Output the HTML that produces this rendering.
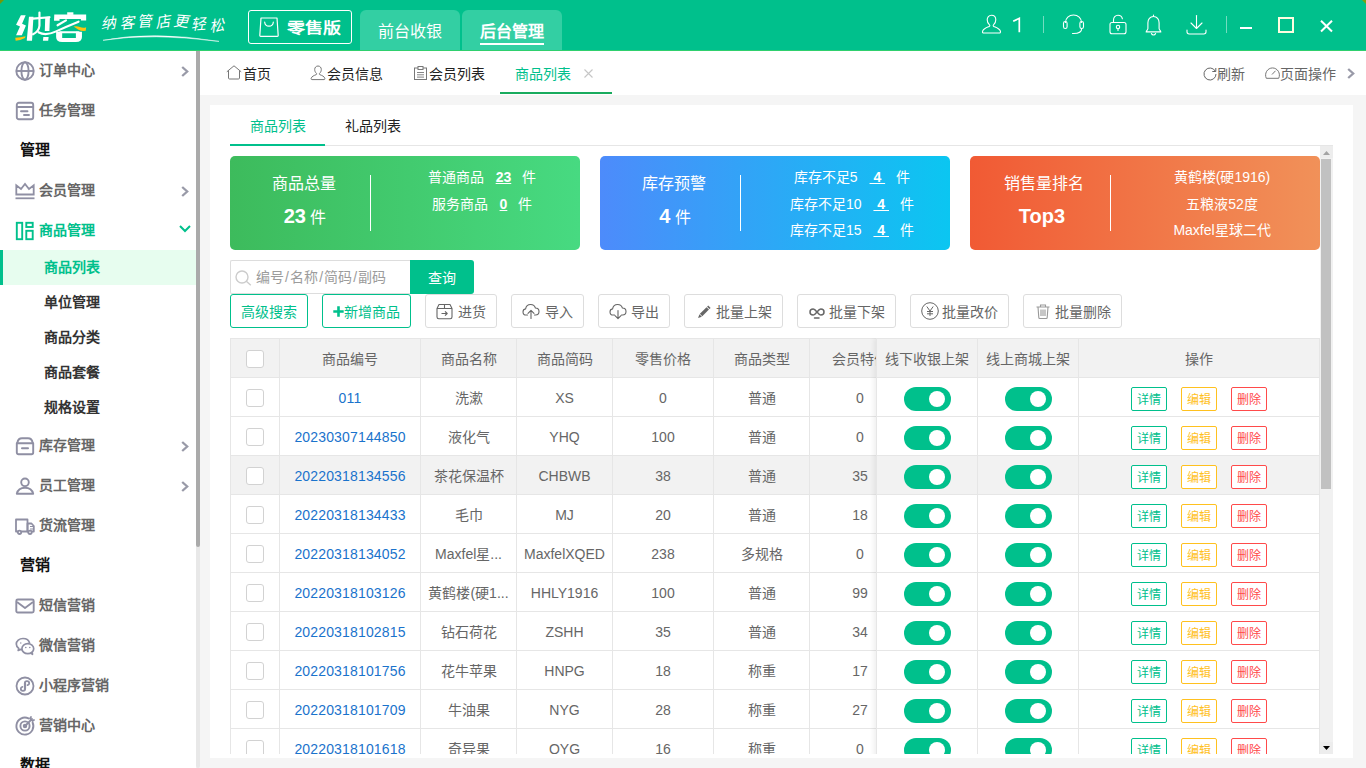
<!DOCTYPE html>
<html lang="zh-CN">
<head>
<meta charset="utf-8">
<title>商品列表</title>
<style>
*{box-sizing:border-box;margin:0;padding:0}
html,body{width:1366px;height:768px;overflow:hidden;background:#f5f5f5}
body{font-family:"Liberation Sans",sans-serif;font-size:14px;color:#666;position:relative}
.abs{position:absolute}
svg{display:block;overflow:visible}
/* header */
#hd{position:absolute;left:0;top:0;width:1366px;height:51px;background:#00c08c;border-bottom:1px solid #2fd06e}
#hd .logo{position:absolute;left:15px;top:5px;font-size:35px;line-height:40px;font-weight:900;color:#fff;letter-spacing:-1px;transform:skewX(-7deg);transform-origin:left bottom;white-space:nowrap}
#hd .slogan{position:absolute;left:101px;top:12px;font-family:"Liberation Serif",serif;font-style:italic;font-size:15px;line-height:22px;color:#fff;letter-spacing:3px;font-weight:300;white-space:nowrap}
.ver{position:absolute;left:248px;top:10px;width:104px;height:34px;border:1px solid #fff;border-radius:3px;color:#fff}
.ver span{position:absolute;left:38px;top:2px;line-height:30px;font-size:18px;font-weight:900;white-space:nowrap;transform:scaleY(.8);transform-origin:center}
.htab{position:absolute;top:10px;width:100px;height:40px;background:#33cfa3;border-radius:6px 6px 0 0;color:#fff;font-size:16px;line-height:43px;text-align:center}
.htab.on{font-weight:bold}
.htab.on i{position:absolute;left:18px;top:33px;width:64px;height:2px;background:#fff}
.hdiv{position:absolute;top:16px;width:1px;height:17px;background:rgba(255,255,255,.45)}
/* sidebar */
#sb{position:absolute;left:0;top:51px;width:196px;height:717px;background:#fff;overflow:hidden}
.mi{position:absolute;left:0;width:196px;height:40px;line-height:40px;font-weight:bold;color:#666;font-size:14px}
.mi svg{position:absolute;left:15px;top:10px}
.mi span{position:absolute;left:39px;top:-1px;white-space:nowrap}
.mi .ar{position:absolute;left:181px;top:15px}
.mh{position:absolute;left:20px;height:40px;line-height:38px;font-weight:bold;color:#111;font-size:15px}
.si{position:absolute;left:0;width:196px;height:35px;line-height:35px;font-weight:bold;color:#333;padding-left:44px}
.si.on{background:#e7fdef;color:#00c08c;border-left:3px solid #00c08c;padding-left:41px}
#sbar{position:absolute;left:196px;top:51px;width:4px;height:717px;background:#e8e8e8;border-radius:0 0 2px 2px}
#sbar i{position:absolute;left:0;top:0;width:4px;height:496px;background:#aaa;border-radius:0 0 2px 2px}
/* tab bar */
#tb{position:absolute;left:200px;top:51px;width:1166px;height:44px;background:#fff}
.pt{position:absolute;top:0;height:44px;line-height:46px;color:#222;white-space:nowrap}
.pt svg{position:absolute;top:14px}
/* panel */
#pn{position:absolute;left:210px;top:105px;width:1143px;height:653px;background:#fff}

/* inner */
.it{position:absolute;top:6px;height:30px;line-height:30px;font-size:14px;color:#222;white-space:nowrap}
#sc{position:absolute;left:20px;top:40px;width:1103px;height:609px;overflow:hidden;border-top:1px solid #e6e6e6}
.card{position:absolute;top:10px;width:350px;height:94px;border-radius:5px;color:#fff}
.card .t{position:absolute;left:0;width:148px;top:16px;text-align:center;font-size:16px;line-height:24px;white-space:nowrap}
.card .n{position:absolute;left:0;width:150px;top:46px;text-align:center;font-size:16px;line-height:28px;white-space:nowrap}
.card .n b{font-size:20px}
.card .dv{position:absolute;left:140px;top:19px;width:1px;height:56px;background:#fff}
.card .r{position:absolute;left:154px;width:196px;top:8px;text-align:center;line-height:26.700px;font-size:14px;white-space:nowrap}
.card .r u{font-weight:bold;margin:0 8px 0 5px;padding:0 3px}
#sin{position:absolute;left:0;top:114px;width:180px;height:34px;border:1px solid #ddd;border-right:0;border-radius:2px 0 0 2px;background:#fff;color:#9c9c9c;line-height:32px;padding-left:25px;white-space:nowrap}
#sin i{font-style:normal;margin:0 1.100px}
#sbt{position:absolute;left:180px;top:114px;width:64px;height:34px;background:#00c08c;color:#fff;text-align:center;line-height:36px;border-radius:0 3px 3px 0}
.bt{position:absolute;top:148px;height:34px;border:1px solid #ddd;border-radius:3px;line-height:35px;color:#666;white-space:nowrap;background:#fff}
.bt.g{border-color:#00c08c;color:#00c08c}
.bt svg{position:absolute;top:8px}

/* table */
#tl{position:absolute;left:0;top:192px;width:646px;overflow:hidden;border-left:1px solid #e6e6e6;border-top:1px solid #e6e6e6}
#tr{position:absolute;left:646px;top:192px;width:444px;border-left:1px solid #e6e6e6;border-top:1px solid #e6e6e6;box-shadow:-2px 0 5px rgba(0,0,0,.07);clip-path:inset(0 0 0 -12px)}
.row{display:flex;height:39px;width:800px;background:#fff}
.row.h{background:#f2f2f2}
.row.hv{background:#f2f2f2}
.row>div{height:39px;border-right:1px solid #e6e6e6;border-bottom:1px solid #e6e6e6;text-align:center;line-height:38px;white-space:nowrap;overflow:hidden;flex:none;position:relative;color:#666;padding-top:1px}
.c1{width:49px}.c2{width:141px}.c3{width:96px}.c4{width:96px}.c5{width:101px}.c6{width:96px}.c7{width:101px}
.f1{width:101px}.f2{width:101px}.f3{width:241px}
.row .c2{color:#1a73cc;letter-spacing:.16px}
.row.h .c2{color:#666;letter-spacing:0}
.ck{position:absolute;left:15px;top:11px;width:18px;height:18px;border:1px solid #d2d2d2;border-radius:3px;background:#fff}
.row.h .ck{top:11px}
.sw{position:absolute;left:27px;top:9px;width:47px;height:24px;border-radius:12px;background:#00c08c}
.sw:after{content:"";position:absolute;left:25px;top:4px;width:16px;height:16px;border-radius:8px;background:#fff}
.ob{position:absolute;top:9px;width:36px;height:24px;border:1px solid;border-radius:2px;font-size:12px;line-height:25px;text-align:center;background:#fff}
.ob.a{left:52px;color:#00c08c;border-color:#00c08c}
.ob.b{left:102px;color:#ffc11f;border-color:#ffc11f}
.ob.c{left:152px;color:#ff4a4a;border-color:#ff4a4a}
#vs{position:absolute;left:1090px;top:0;width:13px;height:608px;background:#f1f1f1}
#vs .u,#vs .d{position:absolute;left:0;width:13px;height:12px;background:#ededed}
#vs .u{top:0}#vs .d{top:596px}
#vs .th{position:absolute;left:1px;top:13px;width:10px;height:330px;background:#c1c1c1}
</style>
</head>
<body>
<div id="hd">
<svg class="abs" style="left:0;top:0" width="5" height="5" viewBox="0 0 5 5"><path d="M0 0h4L0 4z" fill="#73990a"/></svg><svg class="abs" style="left:1361px;top:0" width="5" height="5" viewBox="0 0 5 5"><path d="M1 0H5v4z" fill="#7d9f10"/></svg>
<svg class="abs" style="left:10px;top:6px" width="90" height="42" viewBox="0 0 1366 637">
<g fill="#fff" stroke="none">
<path d="M165 140H238L183 268 242 296 180 442H92L152 312 92 286Z"/>
<path d="M288 162H356L334 527H254Z"/>
<path d="M535 166L606 160 598 378H528Z"/>
<path d="M506 470H586L580 527H500Z"/>
<path d="M672 130H1156V218H1076V196H752V222H668Z"/>
<path d="M868 95H962V135H868Z"/>
<path d="M700 392H792V486H1000V392H1092V470Q1092 545 1000 545H792Q700 545 700 470Z"/>
</g>
<g fill="none" stroke="#fff" stroke-width="33" stroke-linecap="round" stroke-linejoin="round">
<path d="M350 192L600 170"/>
<path d="M447 100V300Q440 385 350 430"/>
<path d="M432 398Q540 460 700 385T1040 238"/>
<path d="M850 218L722 292"/>
<path d="M760 398H1040"/>
</g>
<path d="M80 480Q160 478 236 457L228 487Q150 526 86 529Z" fill="#ffc30f"/>
<path d="M965 312Q1010 296 1060 318T1156 322L1150 376Q1085 384 1040 360T965 312Z" fill="#ffc30f"/>
</svg>
<div class="slogan"><span style="display:inline-block;transform:translateY(0.5px) rotate(-4deg)">纳</span><span style="display:inline-block;transform:translateY(0px) rotate(-6deg)">客</span><span style="display:inline-block;transform:translateY(-1.5px) rotate(-3deg)">管</span><span style="display:inline-block;transform:translateY(-1px) rotate(-8deg)">店</span><span style="display:inline-block;transform:translateY(-1px) rotate(4deg)">更</span><span style="display:inline-block;transform:translateY(1px) rotate(-4deg)">轻</span><span style="display:inline-block;transform:translateY(2.5px) rotate(-8deg)">松</span></div>
<svg class="abs" style="left:102px;top:34px" width="120" height="9" viewBox="0 0 120 9"><path d="M1 6.300Q50 -3.500 117 7.400Q50 -1.300 1 6.300Z" fill="#fff" stroke="#fff" stroke-width=".5"/></svg>
<div class="ver">
<svg class="abs" style="left:10px;top:6px" width="20" height="20" viewBox="0 0 20 20" fill="none" stroke="#fff" stroke-width="1.2" stroke-linejoin="round"><path d="M2 1h16l1.200 17.500c0 .5-.3.800-.8.800H1.600c-.5 0-.8-.3-.8-.8z"/><path d="M5.700 5.200c.5 5.200 8.100 5.200 8.600 0" stroke-linecap="round"/></svg>
<span>零售版</span></div>
<div class="htab" style="left:360px">前台收银</div>
<div class="htab on" style="left:462px">后台管理<i></i></div>
<!-- user -->
<svg class="abs" style="left:981px;top:14px" width="21" height="21" viewBox="0 0 21 21" fill="none" stroke="#fff" stroke-width="1.1" stroke-linejoin="round" stroke-linecap="round"><path d="M10.5 1.2c2.7 0 4.3 2 4.3 4.6 0 2.200-1 4-2.300 5.100-.5.5-.4 1.300.3 1.600 2.600 1.100 6.300 2.300 6.700 5.200.1.800-.4 1.300-1.100 1.300H2.600c-.7 0-1.200-.5-1.100-1.300.4-2.900 4.100-4.100 6.700-5.200.7-.3.800-1.100.3-1.600C7.200 9.800 6.200 8 6.200 5.800c0-2.600 1.600-4.600 4.300-4.600z"/></svg>
<svg class="abs" style="left:1012px;top:17px" width="10" height="16" viewBox="0 0 10 16" fill="none" stroke="#fff" stroke-width="1.7" stroke-linejoin="miter"><path d="M1.200 4.300L7.300 1.300V15.300"/></svg>
<div class="hdiv" style="left:1043px"></div>
<!-- headset -->
<svg class="abs" style="left:1062px;top:14px" width="23" height="21" viewBox="0 0 23 21" fill="none" stroke="#fff" stroke-width="1.1" stroke-linecap="round" stroke-linejoin="round"><path d="M3.500 8.500C3.500 4 7 1 11.500 1s8 3 8 7.500"/><rect x="1.500" y="7.500" width="3.600" height="7" rx="1.800"/><rect x="17.900" y="7.500" width="3.600" height="7" rx="1.800"/><path d="M19.700 14.500c0 3.500-3.700 5-8.200 5"/><path d="M10.500 19.500h1.500"/></svg>
<!-- lock -->
<svg class="abs" style="left:1109px;top:14px" width="18" height="21" viewBox="0 0 18 21" fill="none" stroke="#fff" stroke-width="1.100" stroke-linecap="round" stroke-linejoin="round"><rect x="1" y="8.500" width="16" height="11.300" rx="2"/><path d="M4.500 8.500V6c0-2.800 1.800-4.800 4.500-4.800 2.400 0 4 1.500 4.400 3.600"/><circle cx="9" cy="13" r="1.700"/><path d="M9 14.700v1.800"/></svg>
<!-- bell -->
<svg class="abs" style="left:1145px;top:14px" width="17" height="22" viewBox="0 0 17 22" fill="none" stroke="#fff" stroke-width="1.100" stroke-linecap="round" stroke-linejoin="round"><path d="M8.500 1v1.500"/><path d="M8.500 2.500c-3.500 0-5.600 2.800-5.600 6.200v5.800c0 1.600-1.700 2.200-1.700 3.400h14.600c0-1.200-1.700-1.800-1.700-3.400V8.700c0-3.400-2.100-6.200-5.600-6.200z"/><path d="M6.400 19.500c.4 1 1.200 1.500 2.100 1.500s1.700-.5 2.100-1.500"/></svg>
<!-- download -->
<svg class="abs" style="left:1186px;top:15px" width="21" height="20" viewBox="0 0 21 20" fill="none" stroke="#fff" stroke-width="1.100" stroke-linecap="round" stroke-linejoin="round"><path d="M10.500 0.500v12.500"/><path d="M5 8l5.500 5.500L16 8"/><path d="M1 15v1.800c0 1.300.9 2.200 2.200 2.200h14.600c1.300 0 2.200-.9 2.200-2.200V15"/></svg>
<div class="hdiv" style="left:1226px"></div>
<div class="abs" style="left:1240px;top:27px;width:12px;height:2px;background:#fff"></div>
<div class="abs" style="left:1278px;top:17px;width:16px;height:16px;border:2px solid #fdfde0"></div>
<svg class="abs" style="left:1320px;top:20px" width="13" height="12" viewBox="0 0 13 12" stroke="#fff" stroke-width="2" fill="none"><path d="M1 .8l11 10.700M12 .8L1 11.500"/></svg>
</div>
<div id="sb">
<div class="mi" style="top:0px"><svg width="20" height="20" viewBox="0 0 20 20" fill="none" stroke="#8f8fa3" stroke-width="1.9"><circle cx="10" cy="10" r="8.700"/><ellipse cx="10" cy="10" rx="3.600" ry="8.700"/><path d="M1.300 10h17.400"/></svg><span>订单中心</span><svg class="ar" width="8" height="11" viewBox="0 0 8 11" fill="none" stroke="#999aa8" stroke-width="2.3"><path d="M1.2 1l5 4.500-5 4.500"/></svg></div>
<div class="mi" style="top:40px"><svg width="20" height="20" viewBox="0 0 20 20" fill="none" stroke="#8f8fa3" stroke-width="1.9" stroke-linecap="round"><rect x="1.800" y="1.800" width="16.400" height="16.400" rx="2"/><path d="M1.800 6h16.400M6 10.300h6.500M9 14h5"/></svg><span>任务管理</span></div>
<div class="mh" style="top:80px">管理</div>
<div class="mi" style="top:120px"><svg width="20" height="20" viewBox="0 0 20 20" fill="none" stroke="#8f8fa3" stroke-width="1.800" stroke-linejoin="miter"><path d="M1.300 13.500V4.300l4.700 3.700 4-5 4 5 4.700-3.700v9.200z"/><path d="M0.500 17.300h19" stroke-width="1.800"/></svg><span>会员管理</span><svg class="ar" width="8" height="11" viewBox="0 0 8 11" fill="none" stroke="#999aa8" stroke-width="2.3"><path d="M1.2 1l5 4.500-5 4.500"/></svg></div>
<div class="mi" style="top:160px;color:#00c08c"><svg width="20" height="20" viewBox="0 0 20 20" fill="none" stroke="#00c08c" stroke-width="1.900"><rect x="1.800" y="1.800" width="5.400" height="16.400"/><rect x="11.300" y="1.800" width="6.400" height="4.200"/><rect x="11.300" y="9.800" width="6.400" height="8.400"/></svg><span>商品管理</span><svg class="ar" style="left:179px;top:14px" width="12" height="8" viewBox="0 0 12 8" fill="none" stroke="#00c08c" stroke-width="2"><path d="M1 1l5 5 5-5"/></svg></div>
<div class="si on" style="top:199px">商品列表</div>
<div class="si" style="top:234px">单位管理</div>
<div class="si" style="top:269px">商品分类</div>
<div class="si" style="top:304px">商品套餐</div>
<div class="si" style="top:339px">规格设置</div>
<div class="mi" style="top:375px"><svg width="20" height="20" viewBox="0 0 20 20" fill="none" stroke="#8f8fa3" stroke-width="1.900" stroke-linecap="round" stroke-linejoin="round"><path d="M1.800 7.200h16.400v9.300c0 1-.7 1.700-1.700 1.700H3.500c-1 0-1.700-.7-1.700-1.700z"/><path d="M2.300 7c.5-3 2.200-4.700 4.700-4.700h6c2.500 0 4.200 1.700 4.700 4.700"/><path d="M7 12.300h6" stroke-width="2"/></svg><span>库存管理</span><svg class="ar" width="8" height="11" viewBox="0 0 8 11" fill="none" stroke="#999aa8" stroke-width="2.3"><path d="M1.2 1l5 4.500-5 4.500"/></svg></div>
<div class="mi" style="top:415px"><svg width="20" height="20" viewBox="0 0 20 20" fill="none" stroke="#8f8fa3" stroke-width="1.900" stroke-linejoin="round"><circle cx="10" cy="6.300" r="3.800"/><path d="M1.800 17.800c1-4 4-6 8.200-6s7.200 2 8.200 6z"/></svg><span>员工管理</span><svg class="ar" width="8" height="11" viewBox="0 0 8 11" fill="none" stroke="#999aa8" stroke-width="2.3"><path d="M1.2 1l5 4.500-5 4.500"/></svg></div>
<div class="mi" style="top:455px"><svg width="20" height="20" viewBox="0 0 20 20" fill="none" stroke="#8f8fa3" stroke-width="1.800" stroke-linejoin="round"><path d="M1 3.500h11.500v12H1z"/><path d="M12.500 7.500h4l2.300 2.500v5.500h-6.300z"/><path d="M15 10.500h3.500M15 13h3.500" stroke-width="1"/><circle cx="4.500" cy="16.300" r="1.700" fill="#fff"/><circle cx="15" cy="16.300" r="1.700" fill="#fff"/></svg><span>货流管理</span></div>
<div class="mh" style="top:495px">营销</div>
<div class="mi" style="top:535px"><svg width="20" height="20" viewBox="0 0 20 20" fill="none" stroke="#8f8fa3" stroke-width="1.900" stroke-linejoin="round"><rect x="1.300" y="3.500" width="17.400" height="13" rx="1.500"/><path d="M2 6l8 6 8-6"/></svg><span>短信营销</span></div>
<div class="mi" style="top:575px"><svg width="20" height="20" viewBox="0 0 20 20" fill="none" stroke="#8f8fa3" stroke-width="1.700" stroke-linejoin="round"><path d="M8 2.500c-3.700 0-6.700 2.500-6.700 5.600 0 1.800 1 3.300 2.500 4.400l-.6 2 2.300-1.100c.5.100 1 .2 1.500.3"/><path d="M14.600 7.200c-.6-2.700-3.300-4.700-6.600-4.700"/><ellipse cx="12.800" cy="12.700" rx="5.900" ry="5"/><path d="M16 17l1.500 1.300-.3-2"/><circle cx="5.800" cy="7" r=".7" fill="#8f8fa3" stroke="none"/><circle cx="10.800" cy="11.500" r=".8" fill="#8f8fa3" stroke="none"/><circle cx="14.800" cy="11.500" r=".8" fill="#8f8fa3" stroke="none"/></svg><span>微信营销</span></div>
<div class="mi" style="top:615px"><svg width="20" height="20" viewBox="0 0 20 20" fill="none" stroke="#8f8fa3" stroke-width="1.800" stroke-linecap="round"><circle cx="10" cy="10" r="8.500"/><path d="M9.800 12.500v-5c0-1.400 1-2.300 2.200-2.300s2.200.9 2.200 2.100c0 1-.7 1.700-1.600 1.900"/><path d="M10.200 7.500v5c0 1.400-1 2.300-2.200 2.300s-2.200-.9-2.200-2.100c0-1 .7-1.700 1.600-1.900"/></svg><span>小程序营销</span></div>
<div class="mi" style="top:655px"><svg width="20" height="20" viewBox="0 0 20 20" fill="none" stroke="#8f8fa3" stroke-width="1.900" stroke-linecap="round"><path d="M17.600 6.500A8.500 8.500 0 1 1 13.500 2.400"/><circle cx="10" cy="10" r="4.600"/><circle cx="10" cy="10" r="1.300" fill="#8f8fa3"/><path d="M10 10l7-7M15 2.500l1-1.500M17.500 5l1.500-1" stroke-width="1.800"/></svg><span>营销中心</span></div>
<div class="mh" style="top:695px">数据</div>
</div>
<div id="sbar"><i></i></div>
<div id="tb">
<div class="pt" style="left:43px"><svg style="left:-17px" width="16" height="15" viewBox="0 0 16 15" fill="none" stroke="#777" stroke-width="1"><path d="M0.800 6.800L8 0.800l7.200 6M2.500 5.500v7.500c0 .6.400 1 1 1h9c.6 0 1-.4 1-1V5.500"/></svg>首页</div>
<div class="pt" style="left:127px"><svg style="left:-17px" width="16" height="16" viewBox="0 0 16 16" fill="none" stroke="#777" stroke-width="1" stroke-linejoin="round"><path d="M8 1c2 0 3.300 1.500 3.300 3.500 0 1.700-.8 3.100-1.800 3.900-.4.400-.3 1 .2 1.200 2 .8 4.900 1.800 5.200 4 .1.600-.3 1-.8 1H1.900c-.5 0-.9-.4-.8-1 .3-2.200 3.200-3.200 5.200-4 .5-.2.600-.8.200-1.200-1-.8-1.800-2.200-1.800-3.900C4.700 2.500 6 1 8 1z"/></svg>会员信息</div>
<div class="pt" style="left:229px"><svg style="left:-15px;top:15px" width="13" height="14" viewBox="0 0 13 14" fill="none" stroke="#777" stroke-width="1"><rect x="0.500" y="2" width="12" height="11.500"/><rect x="4" y="0.500" width="5" height="3" fill="#fff"/><path d="M3 6.500h7M3 8.800h7M3 11.100h7" stroke-width=".9"/></svg>会员列表</div>
<div class="pt" style="left:315px;color:#00c08c">商品列表</div>
<svg class="abs" style="left:384px;top:18px" width="9" height="9" viewBox="0 0 9 9" stroke="#c6c6c6" stroke-width="1.100" fill="none"><path d="M.5.5l8 8M8.500.5l-8 8"/></svg>
<div class="abs" style="left:300px;top:41px;width:112px;height:2px;background:#19ab5e"></div>
<div class="pt" style="left:1017px;color:#666"><svg style="left:-14px;top:16px" width="14" height="14" viewBox="0 0 14 14" fill="none" stroke="#666" stroke-width="1"><path d="M12.300 4.200A6 6 0 1 0 13 7"/><path d="M12.800 1v3.500H9.300"/></svg>刷新</div>
<div class="pt" style="left:1080px;color:#666"><svg style="left:-15px;top:15px" width="15" height="13" viewBox="0 0 15 13" fill="none" stroke="#777" stroke-width="1"><path d="M1.300 12.300A6.900 7.200 0 1 1 13.700 12.300z"/><path d="M7 8.500l3.500-3.700"/></svg>页面操作</div>
<svg class="abs" style="left:1147px;top:17px" width="8" height="11" viewBox="0 0 8 11" fill="none" stroke="#999aa8" stroke-width="2.300"><path d="M1.200 1l5 4.500-5 4.500"/></svg>
</div>
<div id="pn">
<div class="it" style="left:40px;color:#00c08c">商品列表</div><div class="it" style="left:135px">礼品列表</div>
<div class="abs" style="left:20px;top:39px;width:95px;height:2px;background:#00c08c;z-index:2"></div>
<div id="sc">
<div class="card" style="left:0px;background:linear-gradient(90deg,#3dbb5c,#47da81)"><div class="t">商品总量</div><div class="n"><b>23</b> 件</div><div class="dv"></div><div class="r">普通商品 <u>23</u>件<br>服务商品 <u>0</u>件</div></div>
<div class="card" style="left:370px;background:linear-gradient(90deg,#4d8bfb,#0bc6f1)"><div class="t">库存预警</div><div class="n"><b>4</b> 件</div><div class="dv"></div><div class="r">库存不足5 <u>&nbsp;4&nbsp;</u>件<br>库存不足10 <u>&nbsp;4&nbsp;</u>件<br>库存不足15 <u>&nbsp;4&nbsp;</u>件</div></div>
<div class="card" style="left:740px;background:linear-gradient(90deg,#f15a34,#f19159)"><div class="t">销售量排名</div><div class="n" style="left:-3px"><b>Top3</b></div><div class="dv"></div><div class="r">黄鹤楼(硬1916)<br>五粮液52度<br>Maxfel星球二代</div></div>
<div id="sin"><svg class="abs" style="left:4px;top:9px" width="17" height="16" viewBox="0 0 17 16" fill="none" stroke="#ccc" stroke-width="1.400"><circle cx="7" cy="7" r="6"/><path d="M11.300 11.300l4.500 4"/></svg>编号<i>/</i>名称<i>/</i>简码<i>/</i>副码</div>
<div id="sbt">查询</div>
<div class="bt g" style="left:0;width:78px;padding-left:10px">高级搜索</div>
<div class="bt g" style="left:92px;width:89px;padding-left:21px"><svg style="left:10px;top:11px" width="11" height="11" viewBox="0 0 11 11" stroke="#00c08c" stroke-width="2.600" fill="none"><path d="M5.500 0.300v10.400M0.300 5.500h10.400"/></svg>新增商品</div>
<div class="bt" style="left:195px;width:72px;padding-left:32px"><svg style="left:10px" width="17" height="17" viewBox="0 0 17 17" fill="none" stroke="#666" stroke-width="1.100" stroke-linejoin="round"><path d="M1 5.500L3 1.500h11l2 4v8.500c0 1-.7 1.700-1.700 1.700H2.700C1.700 15.700 1 15 1 14z"/><path d="M1 5.500h15M8.500 1.500v4"/><path d="M5.500 10.500h5.500M9 8.300l2.200 2.200L9 12.700"/></svg>进货</div>
<div class="bt" style="left:281px;width:73px;padding-left:33px"><svg style="left:10px" width="18" height="17" viewBox="0 0 18 17" fill="none" stroke="#666" stroke-width="1.100" stroke-linecap="round" stroke-linejoin="round"><path d="M5.500 12H4.200C2.300 12 1 10.600 1 8.900c0-1.600 1.100-2.800 2.600-3C4 3.300 6 1.500 8.600 1.500c2.300 0 4.200 1.400 4.800 3.500 2 .1 3.600 1.600 3.600 3.500s-1.500 3.500-3.500 3.500h-1"/><path d="M9 15.500V7.500M6 10.300l3-3 3 3"/></svg>导入</div>
<div class="bt" style="left:368px;width:72px;padding-left:32px"><svg style="left:10px" width="18" height="17" viewBox="0 0 18 17" fill="none" stroke="#666" stroke-width="1.100" stroke-linecap="round" stroke-linejoin="round"><path d="M5.500 12H4.200C2.300 12 1 10.600 1 8.900c0-1.600 1.100-2.800 2.600-3C4 3.300 6 1.500 8.600 1.500c2.300 0 4.200 1.400 4.800 3.500 2 .1 3.600 1.600 3.600 3.500s-1.500 3.500-3.500 3.500h-1"/><path d="M9 7.500v8M6 12.700l3 3 3-3"/></svg>导出</div>
<div class="bt" style="left:454px;width:99px;padding-left:31px"><svg style="left:12px;top:11px" width="13" height="13" viewBox="0 0 13 13" fill="#666"><g transform="rotate(45 6.500 6.500)"><rect x="4.900" y="-1.800" width="3.400" height="1.700"/><rect x="4.900" y=".6" width="3.400" height="9.400"/><path d="M4.900 10.600h3.400L6.600 14.300z"/></g></svg>批量上架</div>
<div class="bt" style="left:567px;width:99px;padding-left:31px"><svg style="left:11px;top:13px" width="16" height="11" viewBox="0 0 16 11" fill="none" stroke="#666" stroke-width="1.500" stroke-linecap="round"><path d="M4.200 7C2.300 7 1 5.700 1 4S2.300 1 4.200 1C7 1 9 7 11.800 7 13.700 7 15 5.700 15 4s-1.300-3-3.200-3C9 1 7 7 4.200 7z"/><path d="M5.500 10h4.500"/></svg>批量下架</div>
<div class="bt" style="left:680px;width:99px;padding-left:31px"><svg style="left:10px;top:7px" width="18" height="18" viewBox="0 0 18 18" fill="none" stroke="#666" stroke-width="1"><circle cx="9" cy="9" r="8.300"/><path d="M5.800 4.500L9 9l3.200-4.500M9 9v5M6 9.500h6M6 11.800h6"/></svg>批量改价</div>
<div class="bt" style="left:793px;width:99px;padding-left:31px"><svg style="left:12px;top:9px" width="14" height="15" viewBox="0 0 14 15" fill="none" stroke="#999" stroke-width="1.100"><path d="M0.500 3h13M4.500 3V1h5v2M2 3l.8 10.500c0 .6.500 1 1 1h6.400c.5 0 1-.4 1-1L12 3" /><path d="M5 5.500v6.500M7 5.500v6.500M9 5.500v6.500"/></svg>批量删除</div>
<div id="tl">
<div class="row h"><div class="c1"><i class="ck"></i></div><div class="c2">商品编号</div><div class="c3">商品名称</div><div class="c4">商品简码</div><div class="c5">零售价格</div><div class="c6">商品类型</div><div class="c7">会员特价</div></div>
<div class="row"><div class="c1"><i class="ck"></i></div><div class="c2">011</div><div class="c3">洗漱</div><div class="c4">XS</div><div class="c5">0</div><div class="c6">普通</div><div class="c7">0</div></div>
<div class="row"><div class="c1"><i class="ck"></i></div><div class="c2">20230307144850</div><div class="c3">液化气</div><div class="c4">YHQ</div><div class="c5">100</div><div class="c6">普通</div><div class="c7">0</div></div>
<div class="row hv"><div class="c1"><i class="ck"></i></div><div class="c2">20220318134556</div><div class="c3">茶花保温杯</div><div class="c4">CHBWB</div><div class="c5">38</div><div class="c6">普通</div><div class="c7">35</div></div>
<div class="row"><div class="c1"><i class="ck"></i></div><div class="c2">20220318134433</div><div class="c3">毛巾</div><div class="c4">MJ</div><div class="c5">20</div><div class="c6">普通</div><div class="c7">18</div></div>
<div class="row"><div class="c1"><i class="ck"></i></div><div class="c2">20220318134052</div><div class="c3">Maxfel星...</div><div class="c4">MaxfelXQED</div><div class="c5">238</div><div class="c6">多规格</div><div class="c7">0</div></div>
<div class="row"><div class="c1"><i class="ck"></i></div><div class="c2">20220318103126</div><div class="c3">黄鹤楼(硬1...</div><div class="c4">HHLY1916</div><div class="c5">100</div><div class="c6">普通</div><div class="c7">99</div></div>
<div class="row"><div class="c1"><i class="ck"></i></div><div class="c2">20220318102815</div><div class="c3">钻石荷花</div><div class="c4">ZSHH</div><div class="c5">35</div><div class="c6">普通</div><div class="c7">34</div></div>
<div class="row"><div class="c1"><i class="ck"></i></div><div class="c2">20220318101756</div><div class="c3">花牛苹果</div><div class="c4">HNPG</div><div class="c5">18</div><div class="c6">称重</div><div class="c7">17</div></div>
<div class="row"><div class="c1"><i class="ck"></i></div><div class="c2">20220318101709</div><div class="c3">牛油果</div><div class="c4">NYG</div><div class="c5">28</div><div class="c6">称重</div><div class="c7">27</div></div>
<div class="row"><div class="c1"><i class="ck"></i></div><div class="c2">20220318101618</div><div class="c3">奇异果</div><div class="c4">QYG</div><div class="c5">16</div><div class="c6">称重</div><div class="c7">0</div></div>
</div>
<div id="tr">
<div class="row h"><div class="f1">线下收银上架</div><div class="f2">线上商城上架</div><div class="f3">操作</div></div>
<div class="row"><div class="f1"><i class="sw"></i></div><div class="f2"><i class="sw"></i></div><div class="f3"><span class="ob a">详情</span><span class="ob b">编辑</span><span class="ob c">删除</span></div></div>
<div class="row"><div class="f1"><i class="sw"></i></div><div class="f2"><i class="sw"></i></div><div class="f3"><span class="ob a">详情</span><span class="ob b">编辑</span><span class="ob c">删除</span></div></div>
<div class="row hv"><div class="f1"><i class="sw"></i></div><div class="f2"><i class="sw"></i></div><div class="f3"><span class="ob a">详情</span><span class="ob b">编辑</span><span class="ob c">删除</span></div></div>
<div class="row"><div class="f1"><i class="sw"></i></div><div class="f2"><i class="sw"></i></div><div class="f3"><span class="ob a">详情</span><span class="ob b">编辑</span><span class="ob c">删除</span></div></div>
<div class="row"><div class="f1"><i class="sw"></i></div><div class="f2"><i class="sw"></i></div><div class="f3"><span class="ob a">详情</span><span class="ob b">编辑</span><span class="ob c">删除</span></div></div>
<div class="row"><div class="f1"><i class="sw"></i></div><div class="f2"><i class="sw"></i></div><div class="f3"><span class="ob a">详情</span><span class="ob b">编辑</span><span class="ob c">删除</span></div></div>
<div class="row"><div class="f1"><i class="sw"></i></div><div class="f2"><i class="sw"></i></div><div class="f3"><span class="ob a">详情</span><span class="ob b">编辑</span><span class="ob c">删除</span></div></div>
<div class="row"><div class="f1"><i class="sw"></i></div><div class="f2"><i class="sw"></i></div><div class="f3"><span class="ob a">详情</span><span class="ob b">编辑</span><span class="ob c">删除</span></div></div>
<div class="row"><div class="f1"><i class="sw"></i></div><div class="f2"><i class="sw"></i></div><div class="f3"><span class="ob a">详情</span><span class="ob b">编辑</span><span class="ob c">删除</span></div></div>
<div class="row"><div class="f1"><i class="sw"></i></div><div class="f2"><i class="sw"></i></div><div class="f3"><span class="ob a">详情</span><span class="ob b">编辑</span><span class="ob c">删除</span></div></div>
</div>
<div id="vs"><div class="u"><svg class="abs" style="left:3px;top:5px" width="7" height="4" viewBox="0 0 7 4"><path d="M0 4L3.500 0 7 4z" fill="#a3a3a3"/></svg></div><div class="th"></div><div class="d"><svg class="abs" style="left:3px;top:4px" width="7" height="4" viewBox="0 0 7 4"><path d="M0 0h7L3.500 4z" fill="#000"/></svg></div></div>

</div>
<!--SCROLL-->
</div>
</body>
</html>
